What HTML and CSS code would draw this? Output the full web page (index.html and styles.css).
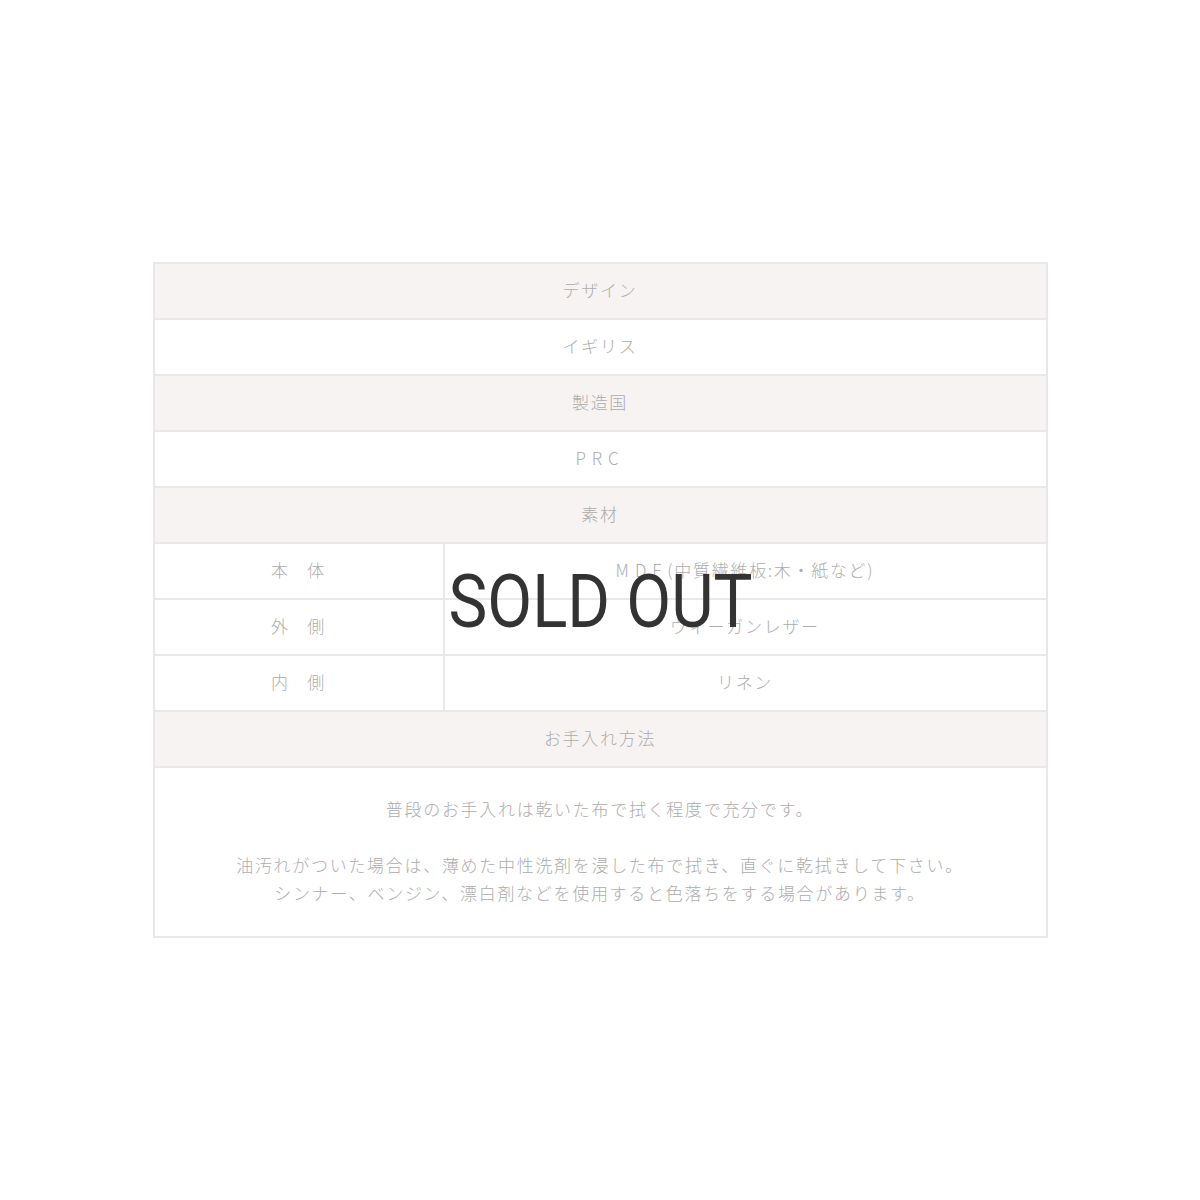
FILE: index.html
```html
<!DOCTYPE html>
<html lang="ja">
<head>
<meta charset="utf-8">
<link rel="stylesheet" href="styles.css">
</head>
<body>
<div class="page">
  <div class="wrap">
    <table class="spec">
      <colgroup><col class="c1"><col class="c2"></colgroup>
      <tr><th colspan="2">デザイン</th></tr>
      <tr><td colspan="2">イギリス</td></tr>
      <tr><th colspan="2">製造国</th></tr>
      <tr><td colspan="2"><span class="wide">PRC</span></td></tr>
      <tr><th colspan="2">素材</th></tr>
      <tr><td class="label">本 体</td><td><span class="wide">MDF</span>(中質繊維板:木・紙など)</td></tr>
      <tr><td class="label">外 側</td><td>ヴィーガンレザー</td></tr>
      <tr><td class="label">内 側</td><td>リネン</td></tr>
      <tr><th colspan="2">お手入れ方法</th></tr>
      <tr><td colspan="2" class="body">
        <p>普段のお手入れは乾いた布で拭く程度で充分です。</p>
        <p>油汚れがついた場合は、薄めた中性洗剤を浸した布で拭き、直ぐに乾拭きして下さい。<br>シンナー、ベンジン、漂白剤などを使用すると色落ちをする場合があります。</p>
      </td></tr>
    </table>
    <div class="sold">SOLD OUT</div>
  </div>
</div>
</body>
</html>
```
FILE: styles.css
```css
html, body {
  margin: 0;
  padding: 0;
  background: #ffffff;
}
.page {
  width: 1200px;
  height: 1200px;
  display: flex;
  justify-content: center;
  padding-top: 262px;
  box-sizing: border-box;
}
.wrap {
  position: relative;
  width: 895px;
  height: 676px;
}
.spec {
  width: 895px;
  border-collapse: collapse;
  border: 2px solid #e8e8e8;
  font-family: "Noto Sans CJK JP", "Noto Sans", sans-serif;
  font-weight: 300;
  font-size: 17px;
  letter-spacing: 0.1em;
  color: #adadad;
  table-layout: fixed;
}
.spec col.c1 {
  width: 290px;
}
.spec th, .spec td {
  border: 2px solid #e8e8e8;
  height: 50px;
  padding: 0 0 4px;
  text-align: center;
  font-weight: 300;
}
.spec th {
  background: #f6f3f2;
}
.spec td.label {
  word-spacing: 12px;
}
.wide {
  letter-spacing: 0.35em;
}
.spec td.body {
  height: 114px;
  padding: 26px 0 28px;
}
.spec td.body p {
  margin: 0;
  line-height: 28px;
}
.spec td.body p + p {
  margin-top: 28px;
}
.sold {
  position: absolute;
  left: 0;
  right: 0;
  top: 302px;
  text-align: center;
  font-family: "Roboto", "Liberation Sans", sans-serif;
  font-weight: 400;
  font-size: 75px;
  line-height: 75px;
  color: #333333;
  transform: scaleX(0.87);
}
```
